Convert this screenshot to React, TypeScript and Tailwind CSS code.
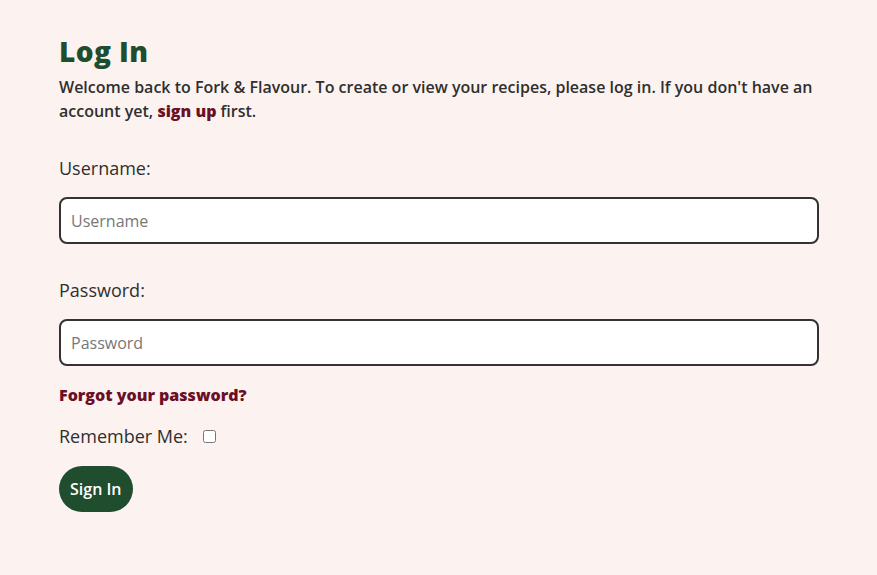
export default function App() {
  return (
    <div className="min-h-[575px] bg-[#fcf3f0] text-[#2f2f2f] font-['Open_Sans',sans-serif]">
      <div className="ml-[59px] w-[760px] pt-[31px]">
        <h1 className="text-[28px] leading-[40px] font-extrabold text-[#1f4d2e] font-['Open_Sans',sans-serif] tracking-[0.4px]">Log In</h1>
        <p className="mt-[4px] text-[16px] leading-[24px] font-semibold">
          Welcome back to Fork &amp; Flavour. To create or view your recipes, please log in. If you don't have an account yet,{' '}
          <a href="#" className="font-extrabold text-[#6b0f26]">sign up</a> first.
        </p>

        <form className="mt-[33px]" onSubmit={e => e.preventDefault()}>
          <label className="block text-[18px] leading-[24px] font-medium">Username:</label>
          <input placeholder="Username"
            className="mt-[17px] block w-full h-[47px] rounded-[8px] border-2 border-[#333] bg-white px-[10px] text-[16px] placeholder:text-[#777] outline-none" />

          <label className="mt-[34px] block text-[18px] leading-[24px] font-medium">Password:</label>
          <input type="password" placeholder="Password"
            className="mt-[17px] block w-full h-[47px] rounded-[8px] border-2 border-[#333] bg-white px-[10px] text-[16px] placeholder:text-[#777] outline-none" />

          <a href="#" className="mt-[17px] block text-[16px] leading-[24px] font-extrabold text-[#6b0f26]">Forgot your password?</a>

          <div className="mt-[17px] flex items-center">
            <span className="text-[18px] leading-[24px]">Remember Me:</span>
            <input type="checkbox" className="ml-[15px] w-[13px] h-[13px]" />
          </div>

          <button type="submit" className="mt-[18px] h-[46px] px-[11px] rounded-full bg-[#1f4d2e] text-white text-[16px] font-semibold">
            Sign In
          </button>
        </form>
      </div>
    </div>
  );
}
